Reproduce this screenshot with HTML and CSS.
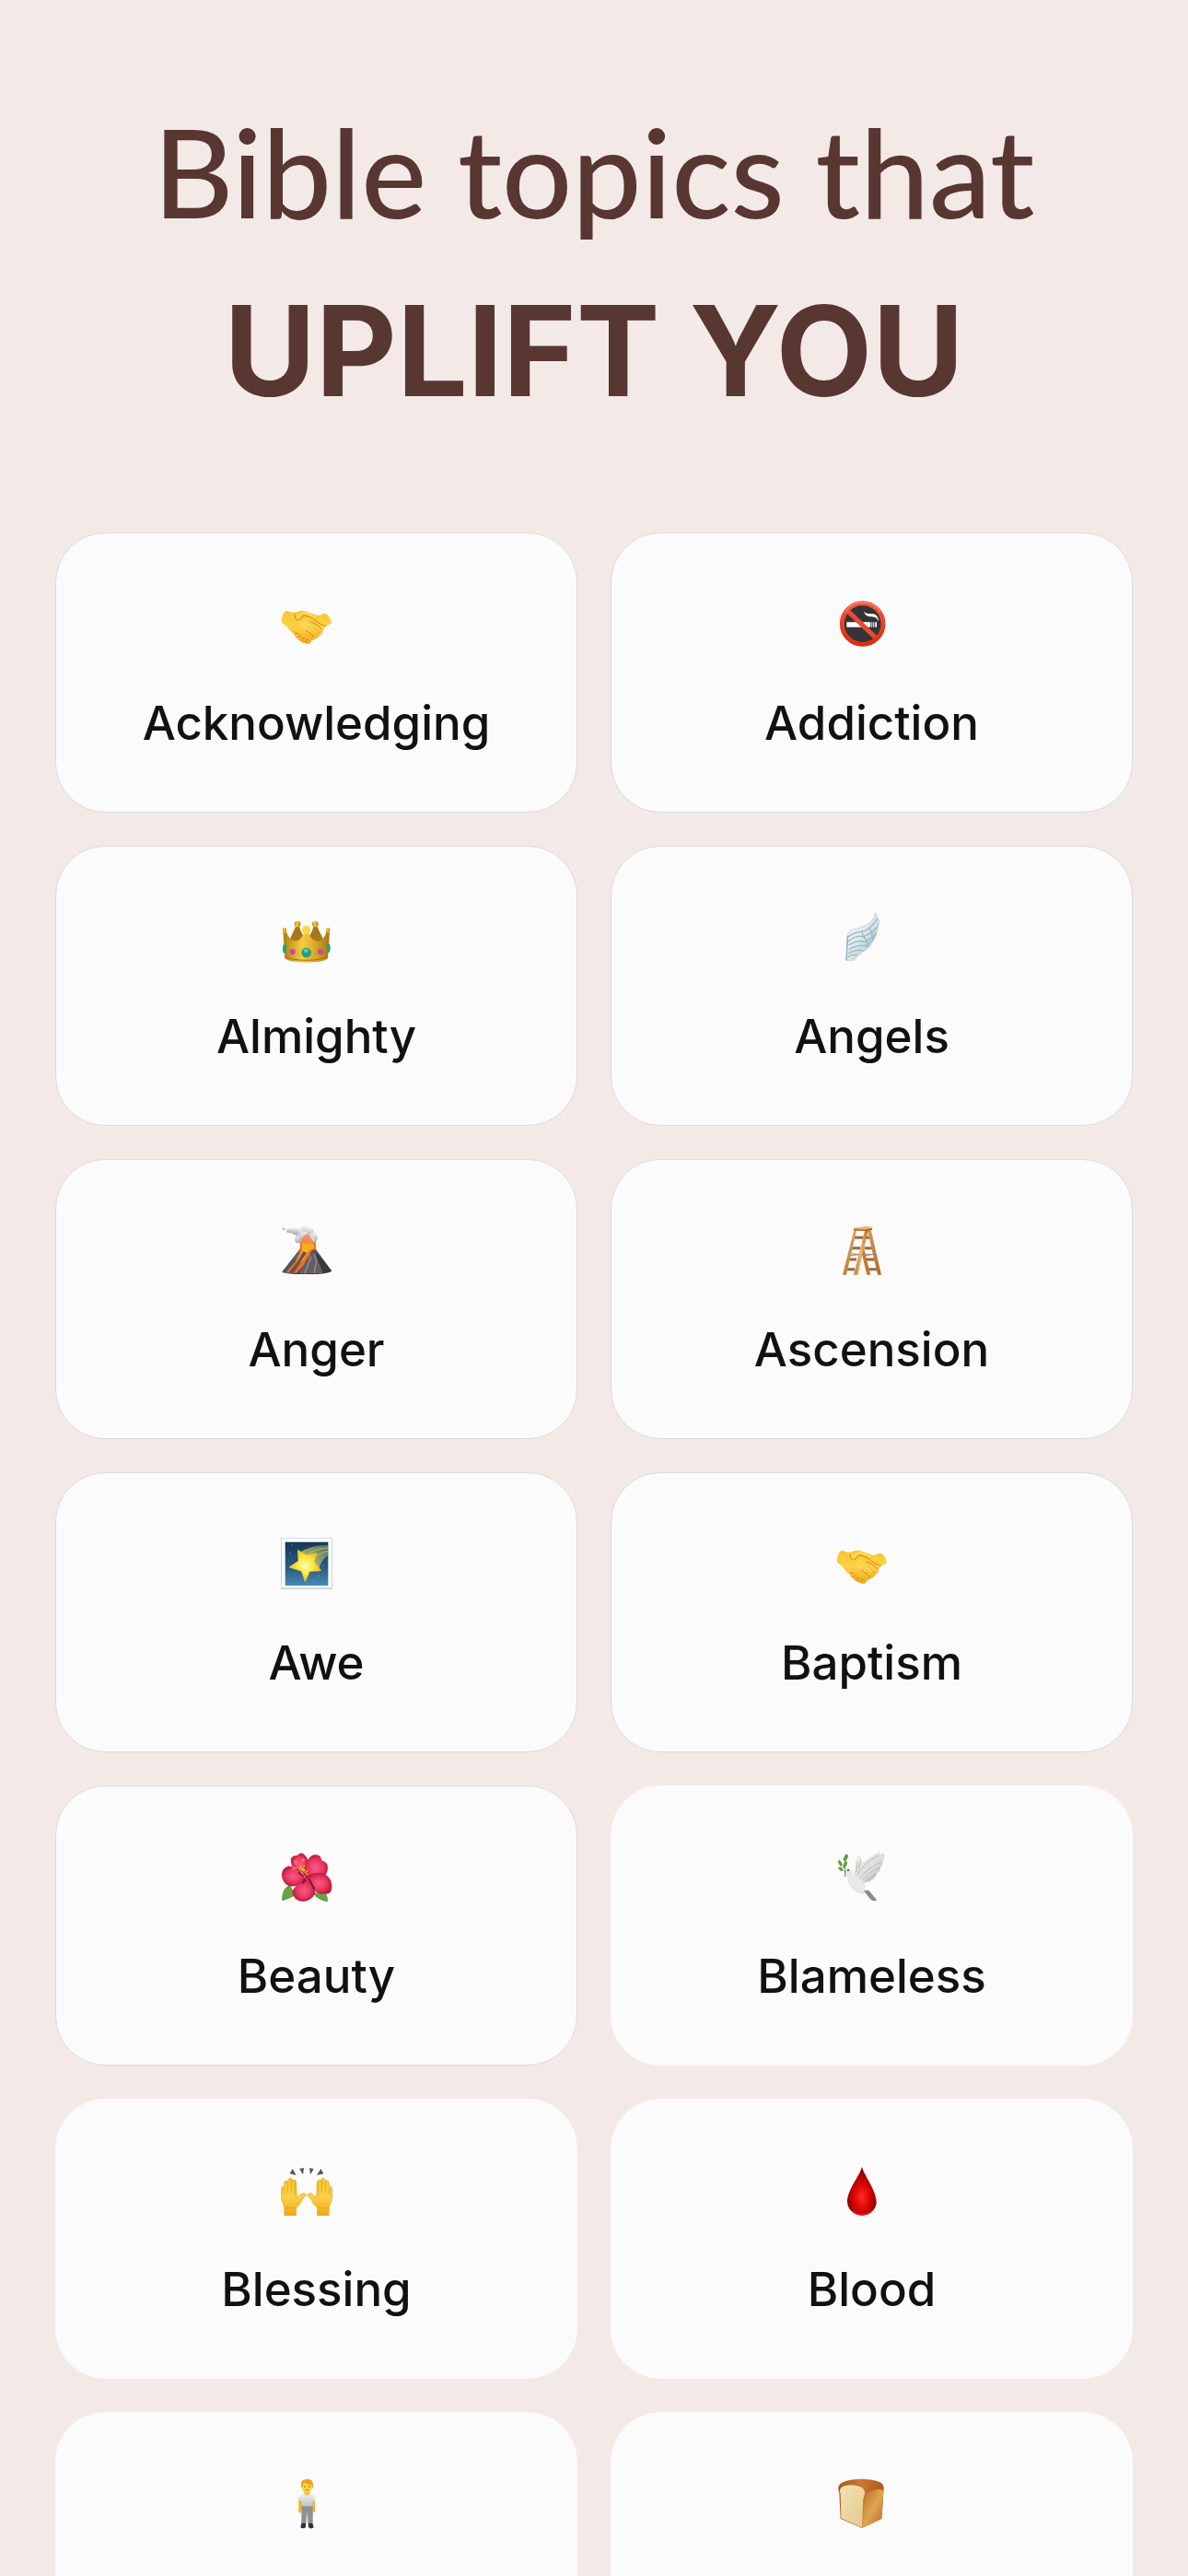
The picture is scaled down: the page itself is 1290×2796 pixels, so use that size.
FILE: index.html
```html
<!DOCTYPE html>
<html lang="en">
<head>
<meta charset="utf-8">
<meta name="viewport" content="width=device-width, initial-scale=1">
<title>Bible topics</title>
<link rel="stylesheet" href="styles.css">
</head>
<body>
<svg class="defs" aria-hidden="true">
  <defs>
    <linearGradient id="skin" x1="0" y1="0" x2="0" y2="1"><stop offset="0" stop-color="#f8c730"/><stop offset=".5" stop-color="#fed048"/><stop offset="1" stop-color="#f0a915"/></linearGradient>
    <linearGradient id="ring" x1="0" y1="0" x2="0" y2="1"><stop offset="0" stop-color="#f4573f"/><stop offset="1" stop-color="#dc2c10"/></linearGradient>
    <linearGradient id="gold" x1="0" y1="0" x2="1" y2="0"><stop offset="0" stop-color="#b07d12"/><stop offset=".4" stop-color="#f1cd40"/><stop offset=".6" stop-color="#e5b52f"/><stop offset="1" stop-color="#a87510"/></linearGradient>
    <linearGradient id="feather" x1="0" y1="0" x2="1" y2="1"><stop offset="0" stop-color="#fafdfe"/><stop offset=".5" stop-color="#dce8ed"/><stop offset="1" stop-color="#8fb2c0"/></linearGradient>
    <linearGradient id="smoke" x1="0" y1="0" x2="0" y2="1"><stop offset="0" stop-color="#f0f0f1"/><stop offset="1" stop-color="#a9a7aa"/></linearGradient>
    <linearGradient id="rock" x1="0" y1="0" x2="1" y2="1"><stop offset="0" stop-color="#77747a"/><stop offset="1" stop-color="#29292d"/></linearGradient>
    <linearGradient id="wood" x1="0" y1="0" x2="1" y2="0"><stop offset="0" stop-color="#bd7b3c"/><stop offset=".5" stop-color="#efb56d"/><stop offset="1" stop-color="#a86629"/></linearGradient>
    <linearGradient id="sky" x1="0" y1="0" x2="0" y2="1"><stop offset="0" stop-color="#173653"/><stop offset=".6" stop-color="#285d87"/><stop offset="1" stop-color="#4989b4"/></linearGradient>
    <linearGradient id="trail" x1="0" y1="1" x2="1" y2="0"><stop offset="0" stop-color="#e9df5c"/><stop offset="1" stop-color="#8fa475" stop-opacity=".5"/></linearGradient>
    <radialGradient id="star"><stop offset="0" stop-color="#fffdb0"/><stop offset=".5" stop-color="#fce945"/><stop offset="1" stop-color="#efbe17"/></radialGradient>
    <radialGradient id="petal"><stop offset="0" stop-color="#f95c83"/><stop offset=".65" stop-color="#e83560"/><stop offset="1" stop-color="#bd1940"/></radialGradient>
    <linearGradient id="plumage" x1="0" y1="0" x2="1" y2="1"><stop offset="0" stop-color="#f3f2f1"/><stop offset=".6" stop-color="#dedcda"/><stop offset="1" stop-color="#9c9996"/></linearGradient>
    <radialGradient id="drop" cx=".5" cy=".62" r=".55"><stop offset="0" stop-color="#ff2a26"/><stop offset=".45" stop-color="#e00706"/><stop offset="1" stop-color="#800000"/></radialGradient>
    <linearGradient id="shirt" x1="0" y1="0" x2="0" y2="1"><stop offset="0" stop-color="#f1f1f3"/><stop offset="1" stop-color="#c2c2c6"/></linearGradient>
    <linearGradient id="crust" x1="0" y1="0" x2="1" y2="0"><stop offset="0" stop-color="#a95518"/><stop offset=".5" stop-color="#cc7830"/><stop offset="1" stop-color="#b4571a"/></linearGradient>
    <linearGradient id="side" x1="0" y1="0" x2="1" y2="1"><stop offset="0" stop-color="#b96a26"/><stop offset=".5" stop-color="#dda64e"/><stop offset="1" stop-color="#b96b27"/></linearGradient>
    <linearGradient id="crumb" x1="0" y1="0" x2="1" y2="1"><stop offset="0" stop-color="#f3e2b4"/><stop offset="1" stop-color="#e2c98d"/></linearGradient>
    <symbol id="handshake" viewBox="45 27 168 168">
      <path fill="url(#skin)" d="M47 102C48 86 54 72 63 69C70 69 76 75 83 74C91 74 97 73 102 71C112 66 125 68 135 74L164 84C174 83 181 79 188 77C197 78 207 92 210 108C206 114 198 117 190 119C187 124 186 129 183 132C183 139 179 145 173 148C169 155 163 158 158 160C153 164 148 165 145 166C142 173 139 177 134 176C130 178 126 176 124 172C119 175 112 172 112 167C106 168 101 164 101 158C93 159 89 153 90 145C80 142 72 128 63 119C56 113 48 111 47 102Z"/>
      <path fill="none" stroke="#c98810" stroke-width="3" stroke-linecap="round" d="M91 82C90 96 99 104 107 97C113 86 121 84 129 86C144 88 153 98 163 105C174 112 181 117 190 118M143 105Q163 111 178 127M137 119Q154 125 168 140M127 132Q142 140 153 154M90 144Q97 138 102 144M101 157Q107 146 112 153M112 167Q117 151 124 159M124 172Q128 157 136 164"/>
      <path fill="none" stroke="#ffdf70" stroke-width="4" stroke-linecap="round" d="M98 84Q100 95 107 82Q119 70 133 79L158 89M112 111L138 136M118 102L162 137"/>
    </symbol>
    <symbol id="no-smoking" viewBox="54 27 168 168">
      <circle cx="140" cy="111" r="67" fill="#343436"/>
      <path d="M88 106H166V122H88ZM169 106H172V122H169ZM175 106H178V122H175ZM181 106H186V122H181Z" fill="#fff"/>
      <path d="M144 71C154 84 176 72 187 86Q192 93 192 105C186 87 177 90 164 88Q148 86 144 71Z" fill="#fff"/>
      <path d="M89 67L184 158" stroke="#e74a37" stroke-width="15"/>
      <circle cx="140" cy="111" r="67" fill="none" stroke="url(#ring)" stroke-width="15"/>
      <path d="M83 75Q103 41 142 42Q180 43 198 75" fill="none" stroke="#ff927c" stroke-width="3"/>
    </symbol>
    <symbol id="crown" viewBox="45 27 168 168">
      <path fill="#aa7618" d="M62 143L94 76Q100 71 105 77Q112 104 128 118Q144 105 151 77Q157 71 163 77L195 143Z"/>
      <path fill="url(#gold)" d="M52 91Q57 86 62 92Q69 112 81 121Q108 132 121 96H135Q147 132 175 122Q190 113 193 92Q198 86 204 92L198 181Q181 194 128 194Q75 194 58 181Z"/>
      <g fill="url(#gold)"><ellipse cx="57" cy="89" rx="6" ry="9"/><circle cx="99" cy="69" r="10"/><circle cx="157" cy="69" r="10"/><ellipse cx="199" cy="89" rx="6" ry="9"/></g>
      <circle cx="128" cy="88" r="14" fill="#fbd64a"/>
      <path d="M58 174Q82 187 128 187Q174 187 198 174" fill="none" stroke="#a87411" stroke-width="3"/>
      <g fill="#20a27c"><ellipse cx="128" cy="162" rx="16" ry="16"/><ellipse cx="57" cy="149" rx="6" ry="15"/><ellipse cx="200" cy="147" rx="6" ry="15"/></g>
      <ellipse cx="127" cy="156" rx="8" ry="6" fill="#63cda8"/>
      <g fill="#cf43a9"><circle cx="83" cy="159" r="9"/><circle cx="174" cy="159" r="9"/></g>
    </symbol>
    <symbol id="wing" viewBox="54 27 168 168">
      <path fill="url(#feather)" stroke="#b2c9d2" stroke-width="2" d="M87 187L89 108Q92 93 109 87Q159 76 176 51L182 32Q186 39 187 48Q194 51 194 63Q193 74 188 77Q191 88 185 98Q187 109 178 115Q179 124 168 132Q167 144 154 147Q150 158 139 160Q132 170 121 173L113 187Z"/>
      <g fill="none" stroke="#9bb8c4" stroke-width="4" stroke-linecap="round"><path d="M93 110Q118 93 138 94Q168 84 187 52M95 124Q123 104 143 110Q170 98 190 77M96 137Q124 119 147 127Q172 113 185 98M96 151Q126 135 149 140Q163 130 177 115M95 164Q121 148 141 157M94 176Q109 163 121 172"/><path d="M137 92Q140 102 142 111Q151 112 152 128Q158 129 155 145M164 83Q164 93 171 97Q167 108 175 114"/></g>
      <path d="M87 187L92 108" stroke="#91b0be" stroke-width="4"/>
    </symbol>
    <symbol id="volcano" viewBox="45 27 168 168">
      <path fill="url(#rock)" d="M48 182L111 101H154L211 179Q193 190 128 189Q67 190 48 182Z"/>
      <path fill="#f36a20" d="M108 111L107 75H158L159 108L146 112L129 149L96 185L61 184L91 149Z"/>
      <path fill="#ffad20" d="M114 110L112 82Q119 71 123 87Q132 68 141 85Q151 75 153 104L139 111L119 142L75 184L101 143Z"/>
      <path fill="#5a5759" d="M118 115L130 119L114 142L105 157L86 186H69L102 144Z"/>
      <path fill="#626066" d="M153 113L183 187H104L129 140Z"/>
      <path d="M154 114L211 179L183 186Z" fill="#39383c"/>
      <path d="M144 132L122 187M154 123L161 150L153 185" stroke="#929096" stroke-width="4" fill="none"/>
      <g fill="url(#smoke)"><circle cx="122" cy="49" r="17"/><circle cx="137" cy="53" r="16"/><circle cx="105" cy="55" r="15"/><circle cx="102" cy="76" r="12"/><circle cx="150" cy="70" r="15"/><circle cx="120" cy="68" r="17"/><circle cx="145" cy="80" r="10"/><ellipse cx="76" cy="47" rx="14" ry="8"/><ellipse cx="90" cy="49" rx="10" ry="11"/><circle cx="54" cy="40" r="5"/></g>
      <path d="M110 88Q116 58 132 58Q147 69 153 92Z" fill="#ff7c3c" opacity=".75"/>
    </symbol>
    <symbol id="ladder" viewBox="54 27 168 168">
      <path d="M114 70H172M105 104H133M146 104H178M94 141H120M148 141H184M87 173H114M156 173H193" stroke="#9e6835" stroke-width="9"/>
      <path d="M104 122L157 128L183 121M102 128L147 123L184 126" stroke="#83878a" stroke-width="3" fill="none"/>
      <path fill="url(#wood)" d="M112 45H121L87 191H75ZM155 45H167L201 191H189Z"/>
      <path fill="#bd7b3c" d="M135 112L142 96L166 191H154Z"/>
      <path fill="url(#wood)" d="M148 43H159L124 191H111Z"/>
      <path fill="#efb568" d="M110 38L151 33L172 36V42L149 47H112Z"/>
      <path d="M112 44L149 46L171 42" stroke="#8b572b" stroke-width="4" fill="none"/>
    </symbol>
    <symbol id="shooting-star" viewBox="45 27 168 168">
      <path fill="#c5d5df" d="M45 28H213V195H45Z"/><path fill="#fff" d="M48 30H210V190H48Z"/><path fill="url(#sky)" d="M59 41H199V183H59Z"/>
      <path d="M105 76Q146 50 199 51V84Q173 100 167 138Z" fill="url(#trail)"/>
      <path d="M128 86Q160 60 197 61M150 95Q173 76 199 71" stroke="#d6ce58" stroke-width="4" opacity=".6" fill="none"/>
      <path fill="url(#star)" stroke="#efc51f" stroke-width="2" stroke-linejoin="round" d="M100 67L129 84L161 77L154 106L176 134L139 137L124 170L112 136L72 123L102 103Z"/>
      <g fill="#789fb8"><circle cx="81" cy="51" r="2"/><circle cx="102" cy="53" r="1"/><circle cx="75" cy="77" r="2"/><circle cx="70" cy="104" r="1"/><circle cx="86" cy="157" r="2"/><circle cx="169" cy="151" r="2"/><circle cx="181" cy="119" r="2"/><circle cx="151" cy="168" r="2"/></g>
    </symbol>
    <symbol id="hibiscus" viewBox="45 27 168 168">
      <path fill="#69a441" stroke="#447d29" stroke-width="2" d="M50 188Q49 146 75 141L91 170Q76 180 50 188ZM153 168L180 155Q198 168 196 191Q169 187 153 168Z"/>
      <g fill="url(#petal)" stroke="#c01c43" stroke-width="1">
        <path d="M122 106Q74 91 78 53Q82 42 98 42Q111 27 123 41Q132 48 134 67Z"/>
        <path d="M119 94Q132 42 154 40Q175 37 177 58Q201 65 197 87Q195 112 155 125L123 119Z"/>
        <path d="M124 126Q98 146 71 141Q50 131 48 105Q48 85 68 77Q98 76 119 105Z"/>
        <path d="M126 111Q162 92 188 103Q214 119 210 149Q209 169 188 166Q168 171 151 151Z"/>
        <path d="M128 120Q159 139 156 166Q143 190 119 191Q87 192 83 160Q87 139 128 120Z"/>
      </g>
      <path d="M127 112L117 134M137 117L155 153M119 109L102 98" stroke="#76122c" stroke-width="5"/>
      <path d="M128 118L102 82L91 64M109 84L117 57M105 81L87 84" stroke="#f87080" stroke-width="3"/>
      <g fill="#ff6263"><circle cx="93" cy="62" r="6"/><circle cx="117" cy="57" r="6"/><circle cx="87" cy="84" r="6"/></g>
      <path d="M108 78L132 105M121 74L114 101M106 84L134 95" stroke="#f4c928" stroke-width="6" stroke-dasharray="4 4"/>
    </symbol>
    <symbol id="dove" viewBox="54 27 168 168">
      <path fill="url(#plumage)" stroke="#c5c2bf" d="M111 102L117 89L118 64Q128 32 134 53L138 68Q163 49 194 30Q195 36 192 41Q207 32 211 39Q209 56 203 61Q210 68 198 79Q200 91 187 98Q182 115 164 125L142 131Z"/>
      <path d="M123 107Q132 75 192 41M133 113Q152 87 203 61M142 120Q165 92 197 80M151 124L185 99M124 64L119 97M134 58L128 86" stroke="#bab6b3" stroke-width="3" fill="none"/>
      <path fill="#8b8885" d="M143 156L160 155L186 187Q180 193 167 186Z"/>
      <path fill="#ebe9e6" stroke="#bfbcb8" d="M84 92Q89 82 98 85Q106 92 105 106Q109 111 119 113Q143 119 146 140L145 165Q125 168 107 149Q92 132 91 109Q82 101 84 92Z"/>
      <circle cx="93" cy="90" r="3" fill="#303030"/><path d="M84 91L80 95L86 97Z" fill="#cf8050"/>
      <path d="M83 111V89Q76 68 90 42" fill="none" stroke="#55823b" stroke-width="3"/>
      <g fill="#629b45"><ellipse cx="85" cy="49" rx="6" ry="12" transform="rotate(24 85 49)"/><ellipse cx="67" cy="67" rx="5" ry="11" transform="rotate(-28 67 67)"/><ellipse cx="83" cy="72" rx="5" ry="12" transform="rotate(26 83 72)"/><ellipse cx="69" cy="86" rx="5" ry="9" transform="rotate(-55 69 86)"/></g>
    </symbol>
    <symbol id="raised-hands" viewBox="45 27 168 168">
      <g id="palm"><path fill="url(#skin)" stroke="#dfa020" stroke-width="2" d="M57 194L56 165Q46 147 46 128V106Q47 99 54 101L57 84Q60 78 66 84L70 76Q77 66 83 80Q92 75 95 85L97 135L109 126Q119 117 127 126Q125 133 120 134L106 157L95 168L94 194Z"/><path d="M55 104V124M67 85V119M80 78V118M91 85V129M60 169Q75 173 91 168" stroke="#db9a1a" stroke-width="2" fill="none"/></g>
      <use href="#palm" transform="matrix(-1 0 0 1 258 0)"/>
      <path fill="#555" d="M83 42L95 63L74 58ZM105 42L120 39L117 61ZM138 39L152 43L141 61ZM175 42L184 58L162 63Z"/>
    </symbol>
    <symbol id="blood" viewBox="54 27 168 168">
      <path fill="url(#drop)" d="M138 35C132 64 90 108 90 151C92 177 113 193 138 194C163 193 184 177 185 151C184 108 144 64 138 35Z"/>
      <path d="M101 174Q138 205 175 174Q165 193 138 194Q111 193 101 174Z" fill="#f51612"/>
    </symbol>
    <symbol id="person" viewBox="45 27 168 168">
      <path fill="#f3b320" d="M103 94L113 92L115 122L110 142Q105 145 103 138ZM147 92L155 95L157 138Q152 145 149 138L145 119Z"/>
      <path fill="#8f8f94" d="M112 119H149L149 178H133L130 138L127 178H112Z"/>
      <path fill="url(#shirt)" d="M120 78H139L153 87L157 103L148 105L149 121H112L113 105L103 103L108 86Z"/>
      <path fill="#f8bd28" d="M120 68H140V79L130 87L120 79Z"/>
      <ellipse cx="130" cy="56" rx="18" ry="21" fill="#ffd04a"/>
      <path fill="#e7a51a" d="M111 62Q105 32 130 32Q155 32 149 64L145 51Q129 51 121 43L116 53Z"/>
      <g fill="#57401a"><circle cx="123" cy="57" r="2"/><circle cx="137" cy="57" r="2"/></g><path d="M125 68Q130 70 135 68" stroke="#aa6319" stroke-width="2"/>
      <path fill="#303033" d="M112 176H126V188Q119 197 109 190ZM134 176H148L152 190Q143 197 135 189Z"/>
    </symbol>
    <symbol id="bread" viewBox="54 27 168 168">
      <path fill="url(#crust)" d="M68 161L64 78Q54 52 76 43Q100 31 142 32Q184 34 201 45Q212 54 208 76L202 162L138 192Z"/>
      <path fill="url(#side)" d="M147 92Q156 72 184 67Q204 62 208 74L202 161L138 191Z"/>
      <path fill="url(#crumb)" d="M68 80Q61 62 79 55Q110 47 133 58Q149 65 147 82L142 96L138 190L70 160Z"/>
      <g fill="#d7bd80"><circle cx="89" cy="80" r="2"/><circle cx="112" cy="99" r="2"/><circle cx="87" cy="124" r="2"/><circle cx="120" cy="137" r="2"/><circle cx="97" cy="154" r="2"/><circle cx="124" cy="73" r="2"/></g>
    </symbol>
  </defs>
</svg>
<main class="screen">
  <h1 class="title"><span class="title-lead">Bible topics that</span><strong class="title-main">UPLIFT YOU</strong></h1>
  <nav class="topics" aria-label="Topics">
    <a class="card outlined" href="#acknowledging"><svg class="icon"><use href="#handshake"/></svg><span class="label">Acknowledging</span></a>
    <a class="card outlined" href="#addiction"><svg class="icon"><use href="#no-smoking"/></svg><span class="label">Addiction</span></a>
    <a class="card outlined" href="#almighty"><svg class="icon"><use href="#crown"/></svg><span class="label">Almighty</span></a>
    <a class="card outlined" href="#angels"><svg class="icon"><use href="#wing"/></svg><span class="label">Angels</span></a>
    <a class="card outlined" href="#anger"><svg class="icon"><use href="#volcano"/></svg><span class="label">Anger</span></a>
    <a class="card outlined" href="#ascension"><svg class="icon"><use href="#ladder"/></svg><span class="label">Ascension</span></a>
    <a class="card outlined" href="#awe"><svg class="icon"><use href="#shooting-star"/></svg><span class="label">Awe</span></a>
    <a class="card outlined" href="#baptism"><svg class="icon"><use href="#handshake"/></svg><span class="label">Baptism</span></a>
    <a class="card outlined" href="#beauty"><svg class="icon"><use href="#hibiscus"/></svg><span class="label">Beauty</span></a>
    <a class="card" href="#blameless"><svg class="icon"><use href="#dove"/></svg><span class="label">Blameless</span></a>
    <a class="card" href="#blessing"><svg class="icon"><use href="#raised-hands"/></svg><span class="label">Blessing</span></a>
    <a class="card" href="#blood-topic"><svg class="icon"><use href="#blood"/></svg><span class="label">Blood</span></a>
    <a class="card" href="#body" aria-label="Body"><svg class="icon"><use href="#person"/></svg></a>
    <a class="card" href="#bread-topic" aria-label="Bread"><svg class="icon"><use href="#bread"/></svg></a>
  </nav>
</main>
</body>
</html>
```
FILE: styles.css
```css
* {
  box-sizing: border-box;
}

body {
  margin: 0;
  background: #f3e9e6;
  color: #111;
  font-family: Inter, "Liberation Sans", sans-serif;
}

.defs {
  position: absolute;
  width: 0;
  height: 0;
}

.screen {
  height: 100vh;
  overflow: hidden;
  padding: 90px 60px 0;
}

.title {
  display: flex;
  flex-direction: column;
  margin: 0 0 98px;
  color: #583631;
  text-align: center;
}

.title-lead {
  font-family: Lato, sans-serif;
  font-size: 134px;
  font-weight: 500;
  line-height: 192px;
}

.title-main {
  font-size: 136px;
  font-weight: 700;
  line-height: 198px;
}

.topics {
  display: grid;
  grid-template-columns: 1fr 1fr;
  gap: 36px;
}

.card {
  display: flex;
  flex-direction: column;
  align-items: center;
  gap: 48px;
  min-height: 304px;
  padding: 70px 20px 64px;
  border: 1px solid #fbfbfb;
  border-radius: 54px;
  background: #fbfbfb;
  color: inherit;
  text-decoration: none;
}

.outlined {
  border-color: #dadcdc;
}

.icon {
  width: 56px;
  height: 56px;
  margin-right: 22px;
}

.label {
  font-size: 51px;
  font-weight: 500;
  line-height: 64px;
}
```
